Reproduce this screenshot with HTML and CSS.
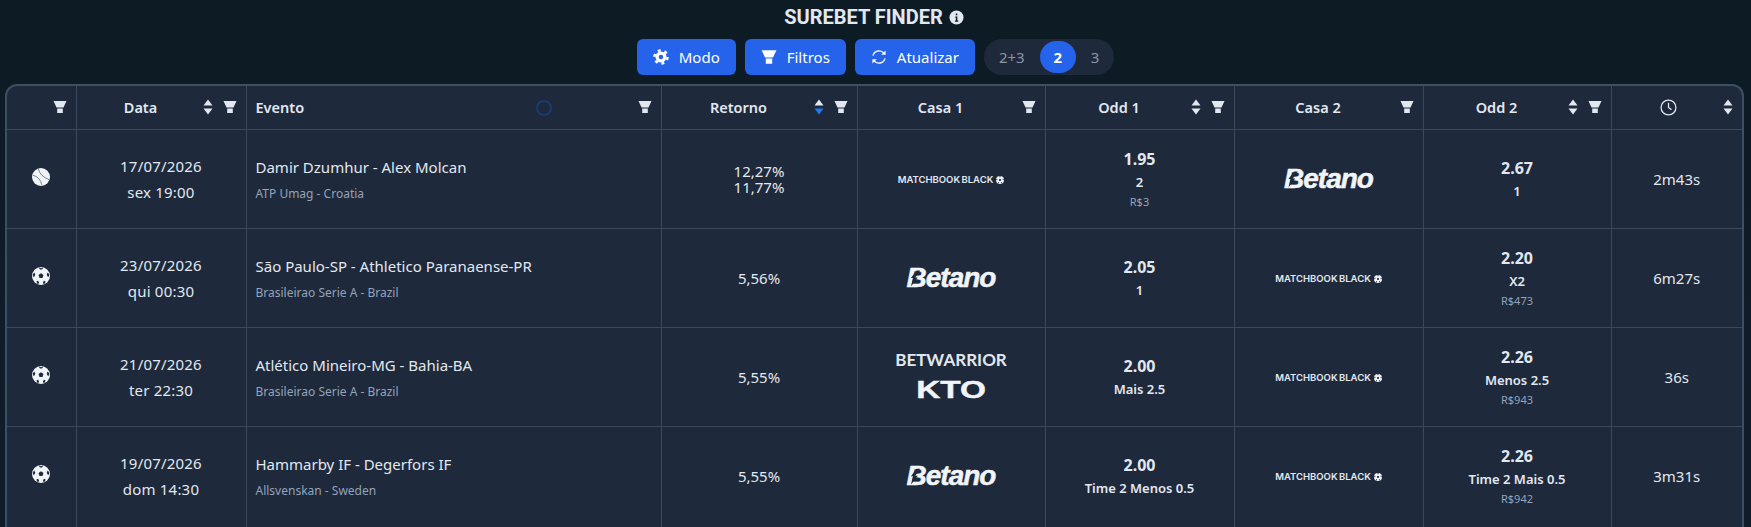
FILE: index.html
```html
<!DOCTYPE html>
<html lang="pt-BR">
  <head>
    <meta charset="UTF-8" />
    <title>Surebet Finder</title>
    <link rel="stylesheet" href="styles.css">
  </head>
  <body>
    <svg class="sprites" xmlns="http://www.w3.org/2000/svg">
      <symbol id="i-filter" viewBox="0 0 14 14">
        <path d="M0.5 1h13l-3 6.4h-7z" fill="currentColor"/>
        <path d="M4.2 8.4h5.6v4.6h-5.6z" fill="currentColor"/>
      </symbol>
      <symbol id="i-sort" viewBox="0 0 10 16">
        <path d="M5 0.5l4.5 6h-9z" fill="currentColor"/>
        <path d="M0.5 9.5h9l-4.5 6z" fill="currentColor"/>
      </symbol>
      <symbol id="i-tennis" viewBox="0 0 20 20">
        <circle cx="10" cy="10" r="10" fill="#f1f5f9"/>
        <path d="M7 1Q9 9 19 13M1 8Q9 10 11 19" fill="none" stroke="#64748b" stroke-width="1"/>
      </symbol>
      <symbol id="i-soccer" viewBox="0 0 20 20">
        <circle cx="10" cy="10" r="10" fill="#f1f5f9"/>
        <path d="M10 7l2.7 2-1 3.2h-3.4l-1-3.2z" fill="#1e293b"/>
        <path d="M7.8 .6l2.2.7 2.2-.7-.5 1.6-1.7.9-1.7-.9zM.9 8l1.7-1.8 1 2-.8 2.3-1.7.3zM19.1 8l-1.7-1.8-1 2 .8 2.3 1.7.3zM5 15.8l1.8-.5 1 1.9-.6 1.8-1.6-.8zM15 15.8l-1.8-.5-1 1.9.6 1.8 1.6-.8z" fill="#1e293b"/>
      </symbol>
    </svg>

    <header class="topbar">
      <h1 class="pageTitle">
        SUREBET FINDER
        <svg class="infoIcon" viewBox="0 0 16 16">
          <circle cx="8" cy="8" r="7.5" fill="#e2e8f0"/>
          <path d="M6.6 6.8h2.3v4.4h.9v1.2H6.4v-1.2h.9V8H6.6zM7.2 3.6h1.7v1.9H7.2z" fill="#0f1b26"/>
        </svg>
      </h1>
      <div class="toolbar">
        <button class="btn" type="button">
          <svg class="btnIcon" viewBox="0 0 16 16">
            <circle cx="8" cy="8" r="6.6" fill="none" stroke="#fff" stroke-width="2.4" stroke-dasharray="3 3.91"/>
            <circle cx="8" cy="8" r="3.9" fill="none" stroke="#fff" stroke-width="3.2"/>
          </svg>
          Modo
        </button>
        <button class="btn" type="button">
          <svg class="btnIcon"><use href="#i-filter"/></svg>
          Filtros
        </button>
        <button class="btn" type="button">
          <svg class="btnIcon" viewBox="0 0 16 16">
            <path d="M2 6.6A6.2 6.2 0 0 1 13 4.4M14 9.4A6.2 6.2 0 0 1 3 11.6" fill="none" stroke="#fff" stroke-width="1.3"/>
            <path d="M14.6 1.4v4.4h-4.4zM1.4 14.6v-4.4h4.4z" fill="#fff"/>
          </svg>
          Atualizar
        </button>
        <div class="segment">
          <span class="segItem">2+3</span>
          <span class="segItem segActive">2</span>
          <span class="segItem">3</span>
        </div>
      </div>
    </header>

    <div class="tableWrap">
      <span class="spinner"></span>
      <table class="betsTable">
        <colgroup>
          <col class="colSport" />
          <col class="colDate" />
          <col class="colEvent" />
          <col class="colReturn" />
          <col class="colHouse" />
          <col class="colOdd" />
          <col class="colOdd" />
          <col class="colHouse" />
          <col />
        </colgroup>
        <thead>
          <tr>
            <th><div class="th"><span class="thLabel"></span><svg class="filterIcon"><use href="#i-filter"/></svg></div></th>
            <th><div class="th"><span class="thLabel">Data</span><svg class="sortIcon"><use href="#i-sort"/></svg><svg class="filterIcon"><use href="#i-filter"/></svg></div></th>
            <th><div class="th"><span class="thLabel thLeft">Evento</span><svg class="filterIcon"><use href="#i-filter"/></svg></div></th>
            <th><div class="th"><span class="thLabel">Retorno</span>
              <svg class="sortIcon" viewBox="0 0 10 16">
                <path d="M5 0.5l4.5 6h-9z" fill="#e2e8f0"/>
                <path d="M0.5 9.5h9l-4.5 6z" fill="#1d7bf5"/>
              </svg><svg class="filterIcon"><use href="#i-filter"/></svg></div></th>
            <th><div class="th"><span class="thLabel">Casa 1</span><svg class="filterIcon"><use href="#i-filter"/></svg></div></th>
            <th><div class="th"><span class="thLabel">Odd 1</span><svg class="sortIcon"><use href="#i-sort"/></svg><svg class="filterIcon"><use href="#i-filter"/></svg></div></th>
            <th><div class="th"><span class="thLabel">Casa 2</span><svg class="filterIcon"><use href="#i-filter"/></svg></div></th>
            <th><div class="th"><span class="thLabel">Odd 2</span><svg class="sortIcon"><use href="#i-sort"/></svg><svg class="filterIcon"><use href="#i-filter"/></svg></div></th>
            <th><div class="th"><span class="thLabel">
              <svg class="clockIcon" viewBox="0 0 16 16">
                <circle cx="8" cy="8" r="7" fill="none" stroke="currentColor" stroke-width="1.2"/>
                <path d="M8 3.6V8l2.8 2" fill="none" stroke="currentColor" stroke-width="1.2"/>
              </svg>
            </span><svg class="sortIcon"><use href="#i-sort"/></svg></div></th>
          </tr>
        </thead>
        <tbody>
          <tr>
            <td><svg class="sportIcon"><use href="#i-tennis"/></svg></td>
            <td class="dateCell">17/07/2026<br />sex 19:00</td>
            <td class="eventCell">
              <div class="eventName">Damir Dzumhur - Alex Molcan</div>
              <div class="eventLeague">ATP Umag - Croatia</div>
            </td>
            <td class="returnCell">12,27%<br />11,77%</td>
            <td><span class="logoMatchbook">MATCHBOOK BLACK<svg class="logoBall"><use href="#i-soccer"/></svg></span></td>
            <td>
              <div class="oddValue">1.95</div>
              <div class="oddMarket">2</div>
              <div class="oddStake">R$3</div>
            </td>
            <td><span class="logoBetano">Betano</span></td>
            <td>
              <div class="oddValue">2.67</div>
              <div class="oddMarket">1</div>
            </td>
            <td>2m43s</td>
          </tr>
          <tr>
            <td><svg class="sportIcon"><use href="#i-soccer"/></svg></td>
            <td class="dateCell">23/07/2026<br />qui 00:30</td>
            <td class="eventCell">
              <div class="eventName">São Paulo-SP - Athletico Paranaense-PR</div>
              <div class="eventLeague">Brasileirao Serie A - Brazil</div>
            </td>
            <td class="returnCell">5,56%</td>
            <td><span class="logoBetano">Betano</span></td>
            <td>
              <div class="oddValue">2.05</div>
              <div class="oddMarket">1</div>
            </td>
            <td><span class="logoMatchbook">MATCHBOOK BLACK<svg class="logoBall"><use href="#i-soccer"/></svg></span></td>
            <td>
              <div class="oddValue">2.20</div>
              <div class="oddMarket">X2</div>
              <div class="oddStake">R$473</div>
            </td>
            <td>6m27s</td>
          </tr>
          <tr>
            <td><svg class="sportIcon"><use href="#i-soccer"/></svg></td>
            <td class="dateCell">21/07/2026<br />ter 22:30</td>
            <td class="eventCell">
              <div class="eventName">Atlético Mineiro-MG - Bahia-BA</div>
              <div class="eventLeague">Brasileirao Serie A - Brazil</div>
            </td>
            <td class="returnCell">5,55%</td>
            <td>
              <div class="logoBetwarrior">BETWARRIOR</div>
              <div class="logoKto"><span>KTO</span></div>
            </td>
            <td>
              <div class="oddValue">2.00</div>
              <div class="oddMarket">Mais 2.5</div>
            </td>
            <td><span class="logoMatchbook">MATCHBOOK BLACK<svg class="logoBall"><use href="#i-soccer"/></svg></span></td>
            <td>
              <div class="oddValue">2.26</div>
              <div class="oddMarket">Menos 2.5</div>
              <div class="oddStake">R$943</div>
            </td>
            <td>36s</td>
          </tr>
          <tr>
            <td><svg class="sportIcon"><use href="#i-soccer"/></svg></td>
            <td class="dateCell">19/07/2026<br />dom 14:30</td>
            <td class="eventCell">
              <div class="eventName">Hammarby IF - Degerfors IF</div>
              <div class="eventLeague">Allsvenskan - Sweden</div>
            </td>
            <td class="returnCell">5,55%</td>
            <td><span class="logoBetano">Betano</span></td>
            <td>
              <div class="oddValue">2.00</div>
              <div class="oddMarket">Time 2 Menos 0.5</div>
            </td>
            <td><span class="logoMatchbook">MATCHBOOK BLACK<svg class="logoBall"><use href="#i-soccer"/></svg></span></td>
            <td>
              <div class="oddValue">2.26</div>
              <div class="oddMarket">Time 2 Mais 0.5</div>
              <div class="oddStake">R$942</div>
            </td>
            <td>3m31s</td>
          </tr>
        </tbody>
      </table>
    </div>
  </body>
</html>
```

FILE: styles.css
```css
*,
*:before,
*:after {
  margin: 0;
  padding: 0;
  box-sizing: border-box;
}

html,
body {
  height: 100%;
  overflow: hidden;
}

body {
  font-family: "Noto Sans", sans-serif;
  color: #e2e8f0;
  background: linear-gradient(180deg, #0d1b25 0%, #111c2a 100%);
}

.sprites {
  display: none;
}

/* top bar */
.topbar {
  display: flex;
  flex-direction: column;
  align-items: center;
  height: 84px;
  padding-top: 6px;
}

.pageTitle {
  display: flex;
  align-items: center;
  gap: 6px;
  height: 22px;
  margin-left: -3px;
  font-family: "Roboto", sans-serif;
  font-size: 20px;
  font-weight: 700;
  color: #e2e8f0;
}

.infoIcon {
  width: 15px;
  height: 15px;
}

.toolbar {
  display: flex;
  gap: 9px;
  margin-top: 11px;
}

.btn {
  display: flex;
  align-items: center;
  gap: 10px;
  height: 36px;
  padding: 0 16px;
  font-family: "Noto Sans", sans-serif;
  font-size: 15px;
  color: #fff;
  background-color: #2563eb;
  border: 0;
  border-radius: 6px;
}

.btnIcon {
  width: 16px;
  height: 16px;
}

.segment {
  display: flex;
  align-items: center;
  height: 36px;
  font-size: 15px;
  color: #8a94a6;
  background-color: #1e293b;
  border-radius: 18px;
}

.segItem {
  display: flex;
  align-items: center;
  justify-content: center;
  height: 32px;
  padding: 0 15px;
}

.segActive {
  width: 36px;
  padding: 0;
  font-weight: 700;
  color: #fff;
  background-color: #2563eb;
  border-radius: 18px;
}

/* table */
.tableWrap {
  position: relative;
  margin: 0 7px 0 5px;
  background-color: #1e293b;
  border: 2px solid #3f4f63;
  border-bottom: 0;
  border-radius: 12px 12px 0 0;
  overflow: hidden;
}

.spinner {
  position: absolute;
  left: 529px;
  top: 14px;
  width: 16px;
  height: 16px;
  border: 2px solid #1a3a72;
  border-radius: 50%;
}

.betsTable {
  width: 100%;
  table-layout: fixed;
  border-collapse: collapse;
}

.colSport { width: 69px; }
.colDate { width: 170px; }
.colEvent { width: 415px; }
.colReturn { width: 196px; }
.colHouse { width: 188px; }
.colOdd { width: 189px; }

.betsTable th,
.betsTable td {
  border: 1px solid #3a4a5c;
  border-top: 0;
}

.betsTable th:first-child,
.betsTable td:first-child {
  border-left: 0;
}

.betsTable th:last-child,
.betsTable td:last-child {
  border-right: 0;
}

.betsTable tbody tr:last-child td {
  height: 102px;
  padding-bottom: 3px;
  border-bottom: 0;
}

.betsTable th {
  height: 43px;
  padding: 0 9px 0 12px;
  font-size: 14.5px;
  font-weight: 600;
  color: #e2e8f0;
}

.th {
  display: flex;
  align-items: center;
  gap: 10px;
}

.thLabel {
  flex: 1;
  text-align: center;
}

.thLeft {
  margin-left: -3px;
  text-align: left;
}

.filterIcon {
  width: 14px;
  height: 14px;
  color: #e2e8f0;
}

.sortIcon {
  width: 10px;
  height: 16px;
  color: #e2e8f0;
}

.clockIcon {
  display: block;
  width: 17px;
  height: 17px;
  margin: 0 auto;
}

.betsTable td {
  height: 99px;
  padding: 0 9px;
  font-size: 15px;
  line-height: 26px;
  text-align: center;
  color: #e2e8f0;
}

.sportIcon {
  display: block;
  width: 18px;
  height: 18px;
  margin: 0 auto 3px;
}

.betsTable .dateCell {
  letter-spacing: 0.2px;
}

.betsTable .eventCell {
  text-align: left;
}

.eventName {
  font-size: 15px;
  line-height: 22px;
}

.eventLeague {
  margin-top: 8px;
  font-size: 12px;
  line-height: 16px;
  color: #94a3b8;
}

.betsTable .returnCell {
  line-height: 16px;
}

.oddValue {
  font-size: 16px;
  font-weight: 700;
  line-height: 24px;
}

.oddMarket {
  font-size: 13px;
  font-weight: 600;
  line-height: 22px;
}

.oddStake {
  font-size: 11px;
  line-height: 18px;
  color: #94a3b8;
}

/* house logos */
.logoBetano {
  position: relative;
  display: inline-block;
  padding-top: 4px;
  font-family: "Liberation Sans", sans-serif;
  font-size: 28px;
  font-style: italic;
  font-weight: 700;
  letter-spacing: -1px;
  color: #f1f5f9;
  -webkit-text-stroke: 0.5px #f1f5f9;
}

/* the bolt cut through the B */
.logoBetano:before {
  content: "";
  position: absolute;
  left: 0;
  top: 7px;
  width: 20px;
  height: 20px;
  background-color: #1e293b;
  clip-path: polygon(68% 12%, 44% 48%, 56% 48%, 22% 92%, 32% 50%, 22% 50%, 50% 12%);
}

.logoMatchbook {
  display: inline-flex;
  align-items: center;
  gap: 3px;
  font-family: "Inter", sans-serif;
  font-size: 9.5px;
  font-weight: 600;
  word-spacing: -1px;
  color: #e2e8f0;
}

.logoBall {
  width: 8px;
  height: 8px;
}

.logoBetwarrior {
  font-family: "Lato", sans-serif;
  font-size: 17px;
  font-weight: 700;
  line-height: 24px;
  color: #e2e8f0;
}

.logoKto {
  padding-top: 2px;
  font-family: "Liberation Sans", sans-serif;
  font-size: 23px;
  font-weight: 700;
  line-height: 32px;
  color: #f1f5f9;
}

.logoKto span {
  display: inline-block;
  transform: scaleX(1.45);
  -webkit-text-stroke: 0.4px #f1f5f9;
}
```
